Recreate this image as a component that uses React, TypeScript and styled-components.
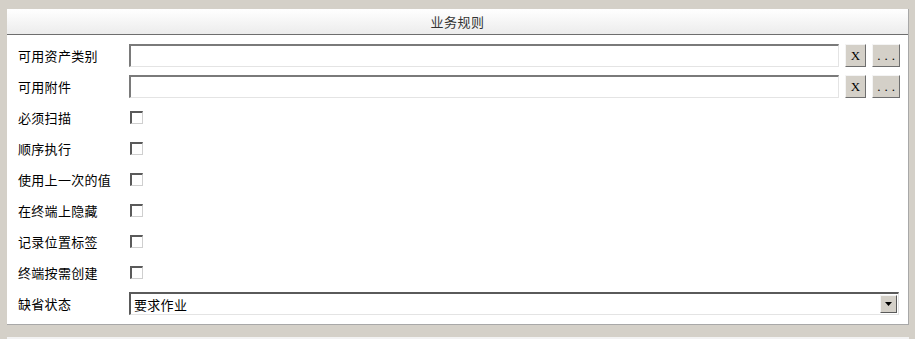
import React from 'react'
import styled, { createGlobalStyle } from 'styled-components'

const GlobalStyle = createGlobalStyle`
  html, body {
    margin: 0;
    padding: 0;
    background: #d4d0c8;
    font-family: "Noto Sans CJK SC", "DejaVu Sans", sans-serif;
    font-size: 13px;
    color: #000;
  }
`

interface Rule {
  label: string
  kind: 'lookup' | 'check' | 'select'
  value?: string
}

const rules: Rule[] = [
  { label: '可用资产类别', kind: 'lookup' },
  { label: '可用附件', kind: 'lookup' },
  { label: '必须扫描', kind: 'check' },
  { label: '顺序执行', kind: 'check' },
  { label: '使用上一次的值', kind: 'check' },
  { label: '在终端上隐藏', kind: 'check' },
  { label: '记录位置标签', kind: 'check' },
  { label: '终端按需创建', kind: 'check' },
  { label: '缺省状态', kind: 'select', value: '要求作业' },
]

const RuleRow: React.FC<{ rule: Rule }> = ({ rule }) => (
  <Row>
    <Label>{rule.label}</Label>
    <Field>
      {rule.kind === 'lookup' && (
        <>
          <TextBox />
          <SmallButton $width={21}>X</SmallButton>
          <SmallButton $width={28} $gap={6} $spacing={4}>...</SmallButton>
        </>
      )}
      {rule.kind === 'check' && <CheckBox />}
      {rule.kind === 'select' && (
        <Select>
          <SelectValue>{rule.value}</SelectValue>
          <DropButton>
            <svg width="7" height="4" viewBox="0 0 7 4">
              <path d="M0 0 H7 L3.5 4 Z" fill="#000" />
            </svg>
          </DropButton>
        </Select>
      )}
    </Field>
  </Row>
)

const App: React.FC = () => (
  <>
    <GlobalStyle />
    <Page>
      <Panel>
        <PanelHeader>业务规则</PanelHeader>
        <PanelBody>
          {rules.map((r) => (
            <RuleRow key={r.label} rule={r} />
          ))}
        </PanelBody>
      </Panel>
      <NextPanel />
    </Page>
  </>
)

export default App

const Page = styled.div`
  width: 915px;
  height: 339px;
  padding: 9px 0 0 7px;
  box-sizing: border-box;
  overflow: hidden;
`

const Panel = styled.div`
  width: 902px;
  background: #fff;
  border-right: 1px solid #a8a8a8;
  border-bottom: 1px solid #a8a8a8;
  box-sizing: border-box;
`

const PanelHeader = styled.div`
  height: 26px;
  line-height: 25px;
  text-align: center;
  letter-spacing: 0.5px;
  color: #333;
  background: linear-gradient(#ffffff, #ececec);
  border-bottom: 1px solid #6e6e6e;
  box-sizing: border-box;
`

const PanelBody = styled.div`
  padding: 5px 8px 5px 11px;
`

const Row = styled.div`
  display: grid;
  grid-template-columns: 111px 1fr;
  align-items: center;
  height: 31px;
`

const Label = styled.div`
  letter-spacing: 0.3px;
  white-space: nowrap;
`

const Field = styled.div`
  display: flex;
  align-items: center;
`

const TextBox = styled.div`
  flex: 1;
  height: 23px;
  margin-right: -2px;
  box-sizing: border-box;
  border-top: 2px solid #7a7a7a;
  border-left: 2px solid #7a7a7a;
  border-right: 1px solid #e4e4e4;
  border-bottom: 1px solid #e4e4e4;
  background: #fff;
`

const SmallButton = styled.div<{ $width: number; $gap?: number; $spacing?: number }>`
  width: ${(p) => p.$width}px;
  height: 23px;
  margin-left: ${(p) => p.$gap ?? 8}px;
  box-sizing: border-box;
  background: #d4d0c8;
  border-top: 1px solid #f4f4f4;
  border-left: 1px solid #f4f4f4;
  border-right: 1px solid #6e6e6e;
  border-bottom: 1px solid #6e6e6e;
  font-family: "Liberation Serif", serif;
  font-size: 13px;
  line-height: 21px;
  text-align: center;
  white-space: nowrap;
  letter-spacing: ${(p) => p.$spacing ?? 0}px;
  text-indent: ${(p) => p.$spacing ?? 0}px;
`

const CheckBox = styled.div`
  width: 13px;
  height: 13px;
  margin-left: 1px;
  box-sizing: border-box;
  border-top: 2px solid #5a5a5a;
  border-left: 2px solid #5a5a5a;
  border-right: 1px solid #cfcfcf;
  border-bottom: 1px solid #cfcfcf;
  background: #fff;
`

const Select = styled.div`
  flex: 1;
  display: flex;
  align-items: center;
  height: 23px;
  margin-right: 1px;
  box-sizing: border-box;
  border-top: 2px solid #5a5a5a;
  border-left: 2px solid #5a5a5a;
  border-right: 1px solid #e4e4e4;
  border-bottom: 1px solid #e4e4e4;
  background: #fff;
`

const SelectValue = styled.div`
  flex: 1;
  padding-left: 3px;
  letter-spacing: 0.3px;
`

const DropButton = styled.div`
  width: 17px;
  height: 18px;
  margin-right: 1px;
  box-sizing: border-box;
  background: #d4d0c8;
  border-top: 1px solid #f4f4f4;
  border-left: 1px solid #f4f4f4;
  border-right: 1px solid #5a5a5a;
  border-bottom: 1px solid #5a5a5a;
  display: flex;
  align-items: center;
  justify-content: center;
`

const NextPanel = styled.div`
  width: 902px;
  height: 2px;
  margin-top: 12px;
  background: #f2f2f2;
`
